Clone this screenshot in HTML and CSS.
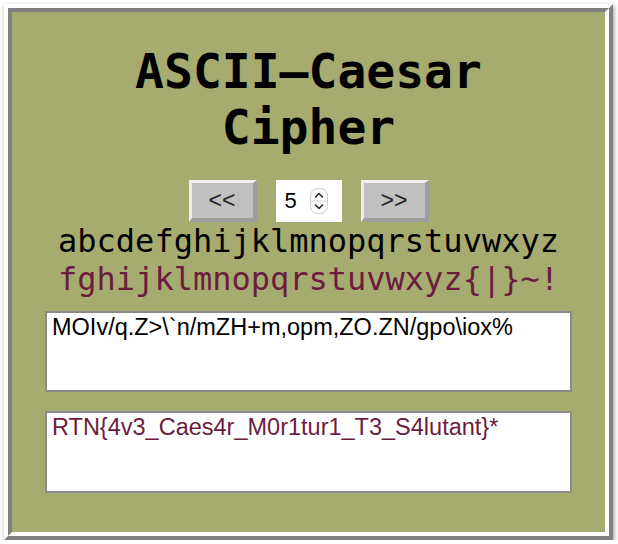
FILE: index.html
```html
<!DOCTYPE html>
<html lang="en">
<head>
<meta charset="utf-8">
<title>ASCII-Caesar Cipher</title>
<link rel="stylesheet" href="styles.css">
</head>
<body>
<div class="frame">
  <div class="panel">
    <h1 class="title">ASCII–Caesar<br>Cipher</h1>
    <div class="controls">
      <button class="btn" type="button">&lt;&lt;</button>
      <div class="shift">
        <span class="shift-value">5</span>
        <svg class="stepper" width="18" height="26" viewBox="0 0 18 26" aria-hidden="true">
          <rect x="0.5" y="0.5" width="17" height="25" rx="7" fill="#fbfbfb" stroke="#cfcfcf"/>
          <line x1="1" y1="13" x2="17" y2="13" stroke="#dedede"/>
          <polyline points="5.5,9 9,5.5 12.5,9" fill="none" stroke="#2e2e2e" stroke-width="1.6" stroke-linecap="round" stroke-linejoin="round"/>
          <polyline points="5.5,17 9,20.5 12.5,17" fill="none" stroke="#2e2e2e" stroke-width="1.6" stroke-linecap="round" stroke-linejoin="round"/>
        </svg>
      </div>
      <button class="btn" type="button">&gt;&gt;</button>
    </div>
    <div class="alphabet">
      <div class="plain">abcdefghijklmnopqrstuvwxyz</div>
      <div class="shifted">fghijklmnopqrstuvwxyz{|}~!</div>
    </div>
    <textarea class="box box-in" readonly spellcheck="false">MOIv/q.Z&gt;\`n/mZH+m,opm,ZO.ZN/gpo\iox%</textarea>
    <textarea class="box box-out" readonly spellcheck="false">RTN{4v3_Caes4r_M0r1tur1_T3_S4lutant}*</textarea>
  </div>
</div>
</body>
</html>
```

FILE: styles.css
```css
html, body {
  margin: 0;
  background: #ffffff;
}

body {
  padding: 4px 0 0 4px;
}

.frame {
  box-sizing: border-box;
  width: 609px;
  height: 536px;
  border-style: solid;
  border-width: 4px;
  border-color: #ffffff #808080 #808080 #ffffff;
  box-shadow: 1px 2px 5px rgba(0, 0, 0, 0.4);
}

.panel {
  box-sizing: border-box;
  height: 100%;
  border-style: solid;
  border-width: 4px;
  border-color: #808080 #ffffff #ffffff #808080;
  background: #a6ac6f;
  display: flex;
  flex-direction: column;
  align-items: center;
}

.title {
  margin: 0;
  padding-top: 31px;
  font-family: "DejaVu Sans Mono", monospace;
  font-weight: bold;
  font-size: 48px;
  line-height: normal;
  color: #000;
  text-align: center;
}

.controls {
  margin-top: 25px;
  display: flex;
  align-items: center;
  gap: 19px;
  height: 42px;
}

.btn {
  box-sizing: border-box;
  width: 68px;
  height: 42px;
  margin: 0;
  padding: 0;
  border-style: solid;
  border-width: 3px 4px 4px 3px;
  border-color: #eeeeee #9c9c9c #9c9c9c #eeeeee;
  background: #c0c0c0;
  font-family: "Liberation Sans", Arial, sans-serif;
  font-size: 23px;
  color: #222;
}

.shift {
  box-sizing: border-box;
  width: 66px;
  height: 42px;
  background: #ffffff;
  display: flex;
  align-items: center;
  padding-left: 9px;
  gap: 13px;
}

.shift-value {
  font-family: "Liberation Sans", Arial, sans-serif;
  font-size: 22px;
  color: #000;
}

.stepper {
  display: block;
}

.alphabet {
  font-family: "DejaVu Sans Mono", monospace;
  font-size: 32px;
  text-align: center;
}

.plain {
  color: #000;
}

.shifted {
  color: #6b1c3f;
}

.box {
  box-sizing: border-box;
  display: block;
  width: 527px;
  height: 81px;
  margin: 13px 0 0 0;
  padding: 1px 5px;
  border: 2px solid #8a8a8a;
  background: #ffffff;
  font-family: "Liberation Sans", Arial, sans-serif;
  font-size: 23.5px;
  line-height: normal;
  resize: none;
  overflow: hidden;
  outline: none;
}

.box-in {
  color: #000;
}

.box-out {
  margin-top: 19px;
  height: 82px;
  color: #6b1c3f;
}
```
